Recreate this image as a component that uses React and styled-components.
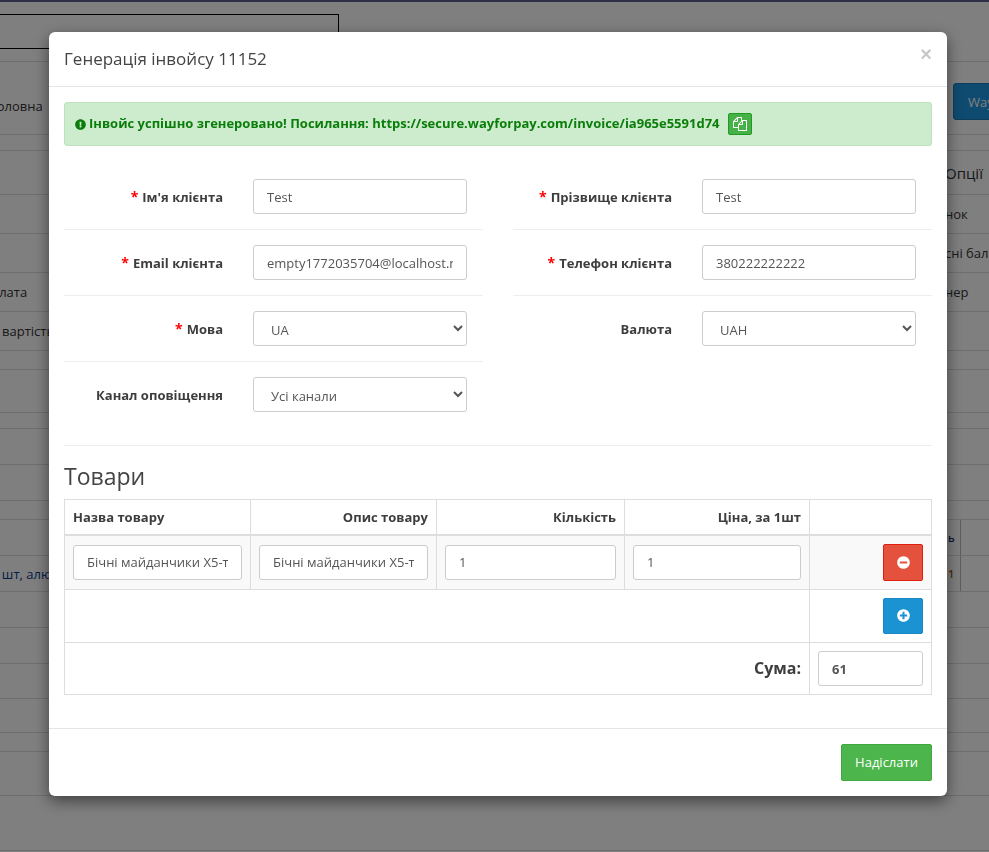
import React from "react";
import styled, { createGlobalStyle } from "styled-components";
import { FaExclamationCircle, FaMinusCircle, FaPlusCircle } from "react-icons/fa";

const Global = createGlobalStyle`
  html, body { margin: 0; padding: 0; height: 100%; overflow: hidden; background: #fff; }
  body { font-family: "Open Sans", "Noto Sans", sans-serif; font-size: 13px; color: #333; }
  * { box-sizing: border-box; }
`;

/* ---------- dimmed page behind the dialog ---------- */
const Page = styled.div`
  height: 852px;
  border-top: 2px solid #5f5f8c;
  padding-top: 1px;
  overflow: hidden;
`;
const BgRow = styled.div`
  display: grid;
  grid-template-columns: 49px 896px 44px;
  height: ${(p) => p.$h}px;
  border-bottom: 1px solid #ddd;
  font-size: 13px;
`;
const LeftCell = styled.div`
  display: flex;
  align-items: center;
  overflow: hidden;
  white-space: nowrap;
  color: ${(p) => p.$color || "#333"};
`;
const RightCell = styled.div`
  display: flex;
  align-items: center;
  overflow: hidden;
  white-space: nowrap;
  color: ${(p) => p.$color || "#333"};
  font-size: ${(p) => p.$size || 13}px;
`;
const Fragment = styled.span`
  margin-left: ${(p) => p.$x || 0}px;
  margin-top: ${(p) => p.$dy || 0}px;
  flex: none;
`;
const Narrow = styled.span`
  width: 15px;
  flex: none;
  padding-left: 3px;
  font-size: 11px;
  font-weight: 600;
`;
const GridLine = styled.span`
  align-self: stretch;
  border-left: 1px solid #bbb;
  flex: none;
  width: 1px;
`;
const Tabs = styled.div`
  width: 339px;
  height: 35px;
  margin-top: 11px;
  border: 1px solid #000;
  border-left: 0;
`;
const TabsSpan = styled.div`
  grid-column: 1 / -1;
`;
const WayButton = styled.span`
  flex: none;
  margin-left: 8px;
  margin-top: 6px;
  height: 37px;
  padding: 9px 14px;
  background: #1e96e0;
  border: 1px solid #177ab8;
  border-radius: 3px 0 0 3px;
  color: #fff;
  font-size: 13px;
`;

/* ---------- dialog ---------- */
const Overlay = styled.div`
  position: fixed;
  inset: 0;
  background: rgba(0, 0, 0, 0.5);
`;
const Modal = styled.div`
  position: absolute;
  left: 49px;
  top: 32px;
  width: 898px;
  height: 764px;
  background: #fff;
  border-radius: 6px;
  box-shadow: 0 5px 15px rgba(0, 0, 0, 0.5);
`;
const Header = styled.div`
  height: 55px;
  padding: 0 15px 1px;
  display: flex;
  align-items: center;
  justify-content: space-between;
  border-bottom: 1px solid #e5e5e5;
`;
const Title = styled.h4`
  margin: 0;
  font-size: 17px;
  font-weight: 400;
  color: #444;
`;
const Close = styled.span`
  position: absolute;
  right: 15px;
  top: 12px;
  font-family: "Liberation Sans", sans-serif;
  font-size: 20px;
  font-weight: 700;
  line-height: 21px;
  color: #c8c8c8;
`;
const Body = styled.div`
  padding: 15px;
`;
const Alert = styled.div`
  height: 44px;
  padding: 0 10px;
  display: flex;
  align-items: center;
  background: #cdebcd;
  border: 1px solid #bce2bc;
  border-radius: 3px;
  color: #0a7d0a;
  font-weight: 700;
  font-size: 13px;
  svg { flex: none; }
`;
const AlertText = styled.span`
  margin-left: 3px;
  margin-bottom: 3px;
  white-space: nowrap;
`;
const CopyButton = styled.span`
  margin-left: 8px;
  width: 24px;
  height: 22px;
  display: inline-flex;
  align-items: center;
  justify-content: center;
  background: #46b146;
  border: 1px solid #1f9c1f;
  border-radius: 2px;
  color: #fff;
`;
const Columns = styled.div`
  display: grid;
  grid-template-columns: 419px 419px;
  gap: 30px;
  margin-top: 18px;
`;
const FormRow = styled.div`
  display: grid;
  grid-template-columns: 159px 214px;
  column-gap: 30px;
  align-items: center;
  padding: 15px 0;
  border-bottom: ${(p) => (p.$last ? "0" : "1px solid #eee")};
`;
const Label = styled.label`
  text-align: right;
  font-weight: 700;
  font-size: 13px;
  color: #3d3d3d;
  white-space: nowrap;
`;
const Star = styled.span`
  color: #f00;
  font-size: 14px;
  margin-right: 4px;
`;
const Input = styled.input`
  display: block;
  width: 100%;
  height: 35px;
  padding: ${(p) => (p.$bold ? "8px 13px 6px" : "6px 13px")};
  border: 1px solid #ccc;
  border-radius: 3px;
  background: #fff;
  font-family: "Open Sans", sans-serif;
  font-size: 13px;
  font-weight: ${(p) => (p.$bold ? 700 : 400)};
  color: #555;
  outline: none;
`;
const Select = styled.select`
  display: block;
  width: 100%;
  height: 35px;
  padding: 8px 13px 6px;
  border: 1px solid #ccc;
  border-radius: 3px;
  background: #fff;
  font-family: "Open Sans", sans-serif;
  font-size: 13px;
  color: #555;
  outline: none;
`;
const Rule = styled.hr`
  border: 0;
  border-top: 1px solid #eee;
  margin: 18px 0 0;
`;
const Heading = styled.h3`
  margin: 17px 0 10px;
  height: 26px;
  font-size: 23px;
  line-height: 26px;
  font-weight: 400;
  color: #444;
`;
const Table = styled.table`
  width: 867px;
  table-layout: fixed;
  border-collapse: collapse;
`;
const Th = styled.th`
  height: 35px;
  padding: 0 8px;
  border: 1px solid #ddd;
  border-bottom: 2px solid #ddd;
  text-align: ${(p) => p.$align || "right"};
  font-size: 13px;
  font-weight: 700;
  color: #3d3d3d;
`;
const Td = styled.td`
  padding: 8px;
  border: 1px solid #ddd;
  background: ${(p) => (p.$shade ? "#f9f9f9" : "#fff")};
  text-align: right;
`;
const Sum = styled.strong`
  font-size: 16px;
  font-weight: 700;
  color: #3d3d3d;
`;
const IconButton = styled.span`
  display: inline-flex;
  align-items: center;
  justify-content: center;
  vertical-align: top;
  width: 40px;
  height: ${(p) => p.$h}px;
  border-radius: 2px;
  background: ${(p) => p.$bg};
  border: 1px solid ${(p) => p.$border};
  color: #fff;
`;
const Footer = styled.div`
  margin-top: 18px;
  padding: 15px;
  border-top: 1px solid #e5e5e5;
  display: flex;
  justify-content: flex-end;
`;
const Submit = styled.button`
  width: 91px;
  height: 37px;
  background: #4cb54c;
  border: 1px solid #41a841;
  border-radius: 2px;
  color: #fff;
  font-family: "Open Sans", sans-serif;
  font-size: 13px;
  font-weight: 500;
`;

const FilesIcon = () => (
  <svg width="14" height="14" viewBox="0 0 1792 1792" fill="currentColor" aria-hidden="true">
    <path d="M1696 384q40 0 68 28t28 68v1216q0 40-28 68t-68 28H736q-40 0-68-28t-28-68v-288H96q-40 0-68-28t-28-68V640q0-40 20-88t48-76L476 68q28-28 76-48t88-20h416q40 0 68 28t28 68v328q68-40 128-40h416zm-544 213L853 896h299V597zM512 213L213 512h299V213zm196 647l316-316V128H640v416q0 40-28 68t-68 28H128v640h512v-256q0-40 20-88t48-76zm956 804V512h-384v416q0 40-28 68t-68 28H768v640h896z" />
  </svg>
);

const bgRows = [
  { h: 59, tabs: true },
  { h: 73, left: "Головна", lx: -10, dy: 16, way: true },
  { h: 16 },
  { h: 44, right: "Опції", size: 15 },
  { h: 39, right: "нок" },
  { h: 39, right: "сні баланс" },
  { h: 39, left: "Оплата", lx: -19, right: "нер" },
  { h: 39, left: "вартість доставки", lx: 2 },
  { h: 19 },
  { h: 43 },
  { h: 16 },
  { h: 36 },
  { h: 36 },
  { h: 19 },
  { h: 36, narrow: "ь", grid: true, rc: "#0b2a6b" },
  { h: 36, left: "1 шт, алюміній", lx: -9, color: "#0b3d91", narrow: "1", grid: true, rc: "#a0570b" },
  { h: 36 },
  { h: 36 },
  { h: 35 },
  { h: 34 },
  { h: 19 },
  { h: 44 },
  { h: 55 },
];

const people = [
  [
    { label: "Ім'я клієнта", req: true, value: "Test" },
    { label: "Email клієнта", req: true, value: "empty1772035704@localhost.net" },
    { label: "Мова", req: true, select: ["UA"] },
    { label: "Канал оповіщення", select: ["Усі канали"], last: true },
  ],
  [
    { label: "Прізвище клієнта", req: true, value: "Test" },
    { label: "Телефон клієнта", req: true, value: "380222222222" },
    { label: "Валюта", select: ["UAH"], last: true },
  ],
];

const product = "Бічні майданчики Х5-т";

export default function App() {
  return (
    <>
      <Global />
      <Page>
        {bgRows.map((r, i) => (
          <BgRow key={i} $h={r.h}>
            {r.tabs ? (
              <TabsSpan>
                <Tabs />
              </TabsSpan>
            ) : (
              <>
                <LeftCell $color={r.color}>{r.left && <Fragment $x={r.lx} $dy={r.dy}>{r.left}</Fragment>}</LeftCell>
                <div />
                <RightCell $size={r.size} $color={r.rc}>
                  {r.way && <WayButton>WayForPay</WayButton>}
                  {r.right && <Fragment>{r.right}</Fragment>}
                  {r.narrow && <Narrow>{r.narrow}</Narrow>}
                  {r.grid && <GridLine />}
                </RightCell>
              </>
            )}
          </BgRow>
        ))}
      </Page>
      <Overlay>
        <Modal>
          <Header>
            <Title>Генерація інвойсу 11152</Title>
            <Close>×</Close>
          </Header>
          <Body>
            <Alert>
              <FaExclamationCircle size={11} />
              <AlertText>Інвойс успішно згенеровано! Посилання: https://secure.wayforpay.com/invoice/ia965e5591d74</AlertText>
              <CopyButton>
                <FilesIcon />
              </CopyButton>
            </Alert>
            <Columns>
              {people.map((col, c) => (
                <div key={c}>
                  {col.map((f) => (
                    <FormRow key={f.label} $last={f.last}>
                      <Label>
                        {f.req && <Star>*</Star>}
                        {f.label}
                      </Label>
                      {f.select ? (
                        <Select defaultValue={f.select[0]}>
                          {f.select.map((o) => (
                            <option key={o}>{o}</option>
                          ))}
                        </Select>
                      ) : (
                        <Input defaultValue={f.value} />
                      )}
                    </FormRow>
                  ))}
                </div>
              ))}
            </Columns>
            <Rule />
            <Heading>Товари</Heading>
            <Table>
              <colgroup>
                <col width="186" />
                <col width="186" />
                <col width="188" />
                <col width="185" />
                <col width="122" />
              </colgroup>
              <thead>
                <tr>
                  <Th $align="left">Назва товару</Th>
                  <Th>Опис товару</Th>
                  <Th>Кількість</Th>
                  <Th>Ціна, за 1шт</Th>
                  <Th />
                </tr>
              </thead>
              <tbody>
                <tr>
                  <Td $shade><Input defaultValue={product} /></Td>
                  <Td $shade><Input defaultValue={product} /></Td>
                  <Td $shade><Input defaultValue="1" /></Td>
                  <Td $shade><Input defaultValue="1" /></Td>
                  <Td $shade>
                    <IconButton $h={37} $bg="#e4513d" $border="#e0200c">
                      <FaMinusCircle size={13} />
                    </IconButton>
                  </Td>
                </tr>
                <tr>
                  <Td colSpan={4} />
                  <Td>
                    <IconButton $h={36} $bg="#1b92d2" $border="#1a87c2">
                      <FaPlusCircle size={13} />
                    </IconButton>
                  </Td>
                </tr>
                <tr>
                  <Td colSpan={4}><Sum>Сума:</Sum></Td>
                  <Td><Input $bold defaultValue="61" /></Td>
                </tr>
              </tbody>
            </Table>
          </Body>
          <Footer>
            <Submit>Надіслати</Submit>
          </Footer>
        </Modal>
      </Overlay>
    </>
  );
}
